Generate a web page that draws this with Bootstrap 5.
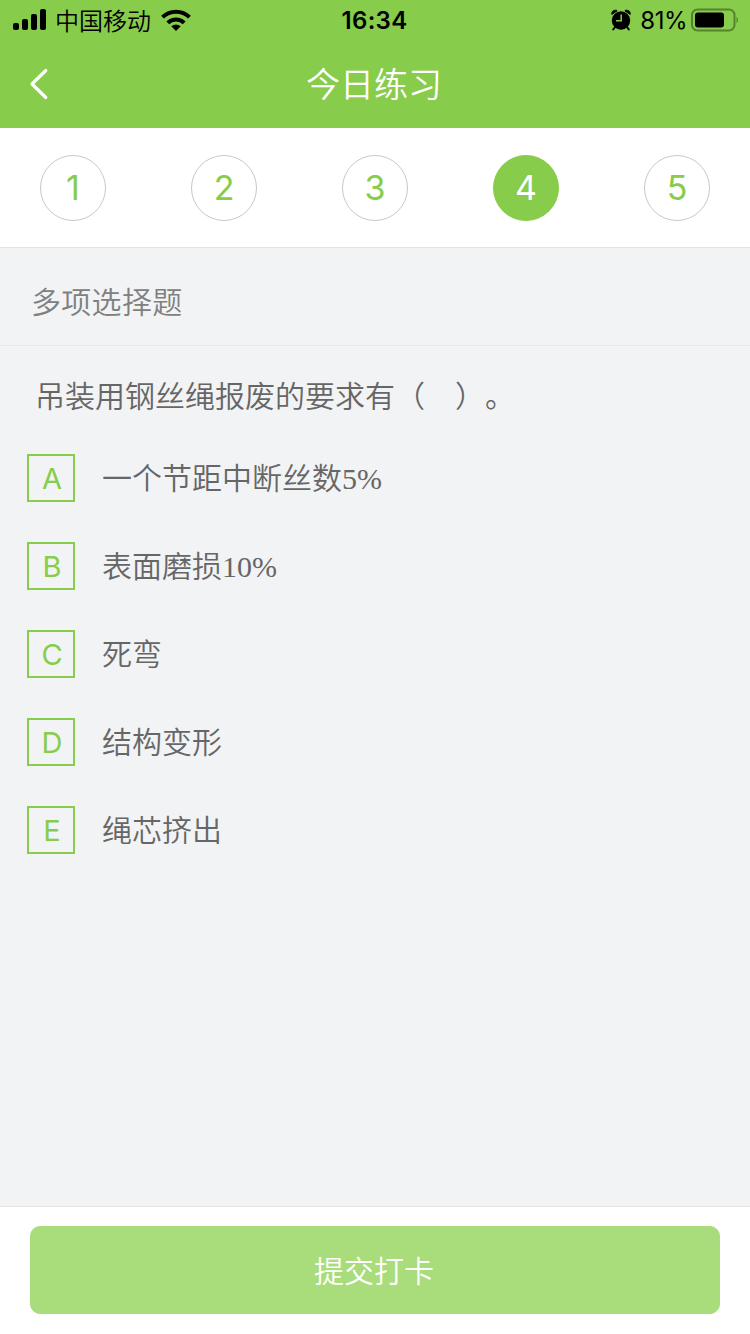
<!DOCTYPE html>
<html lang="zh-CN">
<head>
<meta charset="utf-8">
<meta name="viewport" content="width=device-width, initial-scale=1">
<title>今日练习</title>
<link href="https://cdn.jsdelivr.net/npm/bootstrap@5.3.0/dist/css/bootstrap.min.css" rel="stylesheet">
<style>
  :root { --brand: #87cc4b; --ink: #666; --line: #e3e4e6; }
  body { font-family: Inter, "Noto Sans CJK SC", sans-serif; background: #f2f3f5; color: var(--ink); font-size: 30px; line-height: 1; font-weight: 350; }
  .topbar { background: var(--brand); }
  .status { height: 40px; color: #000; font-size: 24px; padding: 0 11px 0 13px; }
  .status svg, .title-row svg { display: block; flex: none; }
  .status .side { flex: 1 1 0; }
  .carrier { margin: 0 10px 0 9px; padding-top: 3px; }
  .clock { font-weight: 600; font-size: 24px; letter-spacing: .3px; padding-top: 2px; margin-left: -3px; }
  .percent { font-weight: 400; font-size: 24px; margin: 0 4px 0 9px; letter-spacing: -.5px; padding-top: 2px; }
  .title-row { height: 88px; font-size: 34px; padding: 0 29px; }
  .title-row .title { padding: 2px 2px 0 0; }
  .title-row .edge { width: 20px; }
  .steps { height: 120px; padding: 0 40px; border-bottom: 1px solid var(--line); }
  .step { width: 66px; height: 66px; border: 1px solid #c8c8cc; color: var(--brand); font-size: 34px; font-weight: 400; background: none; }
  .step.current { background: var(--brand); border-color: var(--brand); color: #fff; }
  .kind { height: 98px; padding: 10px 31px 0; border-bottom: 1px solid #e8e9eb; color: #808080; letter-spacing: .3px; }
  .question { padding: 35px 35px 0; height: 108px; font-family: "Liberation Serif", "Noto Sans CJK SC", serif; line-height: 32px; text-spacing-trim: space-all; font-feature-settings: "chws" 0, "halt" 0; font-kerning: none; }
  .options { gap: 40px; padding: 0 27px; }
  .option { gap: 27px; height: 48px; font-family: "Liberation Serif", "Noto Sans CJK SC", serif; }
  .option-text { padding-top: 2px; }
  .key { width: 48px; height: 48px; border: 2px solid var(--brand); color: var(--brand); font: 400 29px/1 Inter, sans-serif; padding: 1px 0 0 2px; }
  .submit-bar { height: 128px; padding: 19px 30px 20px; border-top: 1px solid var(--line); }
  .submit { --bs-btn-disabled-bg: #a9dc7a; --bs-btn-disabled-border-color: #a9dc7a; --bs-btn-disabled-color: #fff; --bs-btn-disabled-opacity: 1; font-size: 30px; font-weight: 350; line-height: 1; border-radius: 10px; padding: 7px 14px 6px 12px; }
</style>
</head>
<body class="d-flex flex-column vh-100 overflow-hidden">
<header class="topbar">
  <div class="status d-flex align-items-center">
    <div class="side d-flex align-items-center">
      <svg width="33" height="22" viewBox="0 0 33 22"><rect x="0" y="14" width="6" height="7" rx="2"/><rect x="9" y="10" width="6" height="11" rx="2"/><rect x="18" y="5" width="6" height="16" rx="2"/><rect x="27" y="0" width="6" height="21" rx="2"/></svg>
      <span class="carrier">中国移动</span>
      <svg width="30" height="22" viewBox="0 0 30 22" fill="none" stroke="#000" stroke-width="4"><path d="M1.500 8.200a19.200 19.200 0 0 1 27 0"/><path d="M6.800 13.900a11.600 11.600 0 0 1 16.400 0"/><path d="M10.300 17.300a6.800 6.800 0 0 1 9.400 0L15 21.900z" fill="#000" stroke="none"/></svg>
    </div>
    <time class="clock">16:34</time>
    <div class="side d-flex align-items-center justify-content-end">
      <svg width="20" height="22" viewBox="0 0 20 22"><circle cx="10" cy="11.500" r="9.200"/><path d="M.8 5.400Q.4 1 5.600 1.200L6 2zM19.200 5.400Q19.600 1 14.400 1.200L14 2z" stroke="#000" stroke-width="1"/><path d="M4 18l-1.800 2.500M16 18l1.800 2.500" stroke="#000" stroke-width="2" stroke-linecap="round"/><path d="M10.200 5.500v6.300H5" fill="none" stroke="#87cc4b" stroke-width="1.500"/></svg>
      <span class="percent">81%</span>
      <svg width="48" height="24" viewBox="0 0 48 24"><rect x="1" y="1.500" width="42.500" height="21" rx="5.500" fill="none" stroke="#568230" stroke-width="2"/><rect x="4" y="4.500" width="29" height="15" rx="3"/><path d="M45.500 8.500q3 3.500 0 7z" fill="#568230"/></svg>
    </div>
  </div>
  <div class="title-row d-flex align-items-center justify-content-between text-white">
    <svg class="edge" width="20" height="32" viewBox="0 0 20 32" fill="none" stroke="#fff" stroke-width="3.200" stroke-linecap="round" stroke-linejoin="round"><path d="M16.800 2.500 3 16l13.800 13.500"/></svg>
    <span class="title">今日练习</span>
    <span class="edge"></span>
  </div>
</header>
<nav class="steps d-flex align-items-center justify-content-between bg-white">
  <button class="step rounded-circle p-0">1</button>
  <button class="step rounded-circle p-0">2</button>
  <button class="step rounded-circle p-0">3</button>
  <button class="step current rounded-circle p-0">4</button>
  <button class="step rounded-circle p-0">5</button>
</nav>
<main class="flex-grow-1">
  <div class="kind d-flex align-items-center">多项选择题</div>
  <div class="question">吊装用钢丝绳报废的要求有（&emsp;）。</div>
  <div class="options d-flex flex-column">
    <div class="option d-flex align-items-center"><span class="key d-flex align-items-center justify-content-center">A</span><span class="option-text">一个节距中断丝数5%</span></div>
    <div class="option d-flex align-items-center"><span class="key d-flex align-items-center justify-content-center">B</span><span class="option-text">表面磨损10%</span></div>
    <div class="option d-flex align-items-center"><span class="key d-flex align-items-center justify-content-center">C</span><span class="option-text">死弯</span></div>
    <div class="option d-flex align-items-center"><span class="key d-flex align-items-center justify-content-center">D</span><span class="option-text">结构变形</span></div>
    <div class="option d-flex align-items-center"><span class="key d-flex align-items-center justify-content-center">E</span><span class="option-text">绳芯挤出</span></div>
  </div>
</main>
<footer class="submit-bar bg-white">
  <button class="btn submit w-100 h-100" disabled>提交打卡</button>
</footer>
<script src="https://cdn.jsdelivr.net/npm/bootstrap@5.3.0/dist/js/bootstrap.bundle.min.js"></script>
</body>
</html>
